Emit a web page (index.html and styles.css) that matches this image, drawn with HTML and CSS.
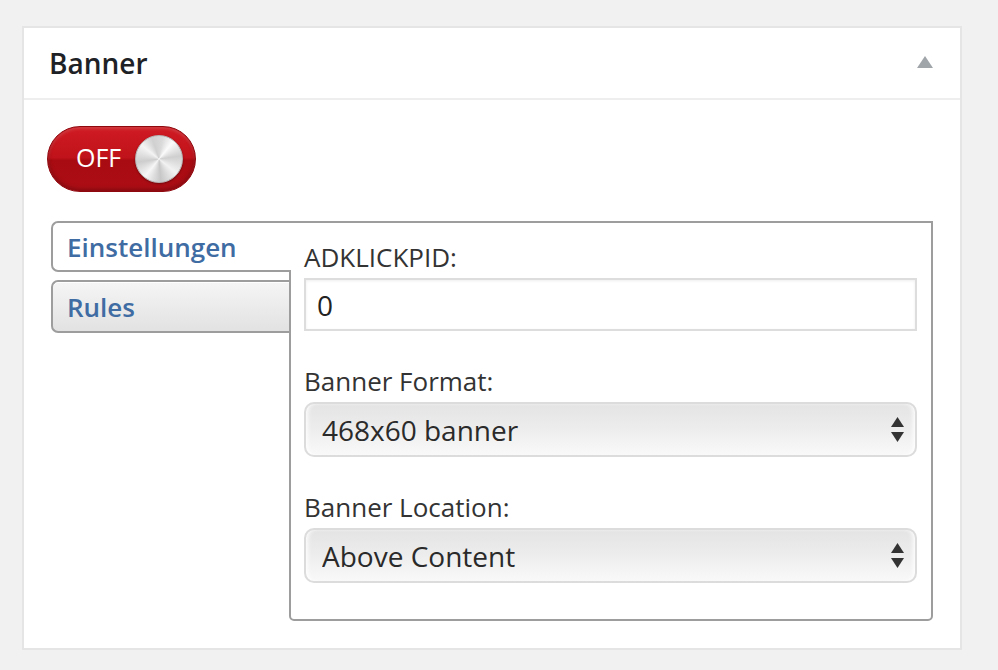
FILE: index.html
```html
<!DOCTYPE html>
<html lang="de">
<head>
<meta charset="utf-8">
<title>Banner</title>
<link rel="stylesheet" href="styles.css">
</head>
<body>
<div class="postbox">
  <div class="postbox-header">
    <h2 class="postbox-title">Banner</h2>
    <span class="toggle-indicator"></span>
  </div>
  <div class="postbox-body">
    <div class="switch">
      <span class="switch-label">OFF</span>
      <span class="switch-knob"></span>
    </div>
    <div class="tabs">
      <ul class="tab-list">
        <li class="tab tab-active">Einstellungen</li>
        <li class="tab">Rules</li>
      </ul>
      <div class="tab-panel">
        <div class="field">
          <label class="field-label" for="adklickpid">ADKLICKPID:</label>
          <input class="text-input" id="adklickpid" type="text" value="0">
        </div>
        <div class="field">
          <label class="field-label" for="format">Banner Format:</label>
          <div class="select-wrap">
            <select class="select" id="format"><option>468x60 banner</option></select>
            <svg class="select-arrows" width="13" height="26" viewBox="0 0 13 26"><polygon points="6.5,0 13,10 0,10" fill="#333"/><polygon points="0,15 13,15 6.5,25" fill="#333"/></svg>
          </div>
        </div>
        <div class="field">
          <label class="field-label" for="location">Banner Location:</label>
          <div class="select-wrap">
            <select class="select" id="location"><option>Above Content</option></select>
            <svg class="select-arrows" width="13" height="26" viewBox="0 0 13 26"><polygon points="6.5,0 13,10 0,10" fill="#333"/><polygon points="0,15 13,15 6.5,25" fill="#333"/></svg>
          </div>
        </div>
      </div>
    </div>
  </div>
</div>
</body>
</html>
```

FILE: styles.css
```css
html, body {
  margin: 0;
  padding: 0;
}
body {
  background: #f1f1f1;
  font-family: "Open Sans", "Liberation Sans", sans-serif;
  color: #333;
  padding-top: 26px;
  padding-left: 22px;
}
.postbox {
  width: 936px;
  background: #fff;
  border: 2px solid #e5e5e5;
}
.postbox-header {
  height: 70px;
  border-bottom: 2px solid #eeeeee;
  display: flex;
  align-items: center;
  justify-content: space-between;
  padding: 0 27px 0 25px;
}
.postbox-title {
  margin: 0;
  font-size: 28px;
  font-weight: 600;
  color: #1e2226;
  line-height: 1;
}
.toggle-indicator {
  width: 0;
  height: 0;
  border-left: 8px solid transparent;
  border-right: 8px solid transparent;
  border-bottom: 12px solid #a0a5aa;
  margin-top: -2px;
}
.postbox-body {
  padding: 26px 27px 27px 23px;
}
.switch {
  width: 149px;
  height: 66px;
  box-sizing: border-box;
  border-radius: 33px;
  border: 1px solid #8e080e;
  background: linear-gradient(#d01b23 0%, #c0121a 48%, #a90b12 52%, #ad0e15 100%);
  box-shadow: inset 0 2px 3px rgba(255,255,255,0.15), inset 0 -2px 4px rgba(0,0,0,0.25);
  display: flex;
  align-items: center;
  padding: 0 12px 0 28px;
}
.switch-label {
  color: #fff;
  font-size: 25px;
  line-height: 1;
  margin-top: -4px;
}
.switch-knob {
  margin-left: auto;
  width: 48px;
  height: 48px;
  border-radius: 50%;
  box-sizing: border-box;
  border: 1px solid #b5b5b5;
  background: conic-gradient(from 10deg, #dadada, #fbfbfb 8%, #cfcfcf 20%, #f2f2f2 33%, #c7c7c7 46%, #f7f7f7 58%, #cdcdcd 70%, #f4f4f4 83%, #d0d0d0 92%, #dadada);
  box-shadow: 0 1px 2px rgba(0,0,0,0.35);
}
.tabs {
  display: flex;
  align-items: flex-start;
  margin-top: 29px;
  margin-left: 4px;
}
.tab-list {
  list-style: none;
  margin: 0;
  padding: 0;
  width: 238px;
  flex: none;
  display: flex;
  flex-direction: column;
  gap: 8px;
}
.tab {
  box-sizing: border-box;
  height: 53px;
  display: flex;
  align-items: center;
  padding-left: 14px;
  font-size: 26px;
  font-weight: 600;
  color: #3f6ca3;
  border: 2px solid #9d9d9d;
  border-right: none;
  border-radius: 7px 0 0 7px;
  background: linear-gradient(#f5f5f5, #e2e2e2);
  box-shadow: inset 0 1px 0 #fff;
}
.tab-active {
  height: 51px;
  width: 240px;
  background: #fff;
  box-shadow: none;
  position: relative;
  z-index: 1;
}
.tab-panel {
  flex: 1;
  box-sizing: border-box;
  border: 2px solid #9d9d9d;
  border-radius: 0 0 5px 5px;
  padding: 18px 14px 36px 13px;
  background: #fff;
}
.field {
  margin-bottom: 34px;
}
.field:last-child {
  margin-bottom: 0;
}
.field-label {
  display: block;
  font-size: 26px;
  line-height: 32px;
  color: #333;
  margin-bottom: 5px;
}
.text-input {
  display: block;
  width: 100%;
  box-sizing: border-box;
  height: 53px;
  margin: 0;
  border: 2px solid #dddddd;
  box-shadow: inset 0 1px 3px rgba(0,0,0,0.07);
  padding: 0 11px;
  font-family: "Open Sans", "Liberation Sans", sans-serif;
  font-size: 28px;
  color: #222;
  outline: none;
}
.select-wrap {
  position: relative;
}
.select {
  display: block;
  width: 100%;
  box-sizing: border-box;
  height: 55px;
  margin: 0;
  -webkit-appearance: none;
  appearance: none;
  border: 2px solid #dcdcdc;
  border-radius: 10px;
  background: linear-gradient(#e4e4e4 0%, #ececec 45%, #f9f9f9 100%);
  box-shadow: inset 4px 0 4px -2px rgba(255,255,255,0.9), inset -4px 0 4px -2px rgba(255,255,255,0.9);
  padding: 0 40px 0 16px;
  font-family: "Open Sans", "Liberation Sans", sans-serif;
  font-size: 28px;
  color: #2a2a2a;
  outline: none;
}
.select-arrows {
  position: absolute;
  right: 13px;
  top: 15px;
}
```
